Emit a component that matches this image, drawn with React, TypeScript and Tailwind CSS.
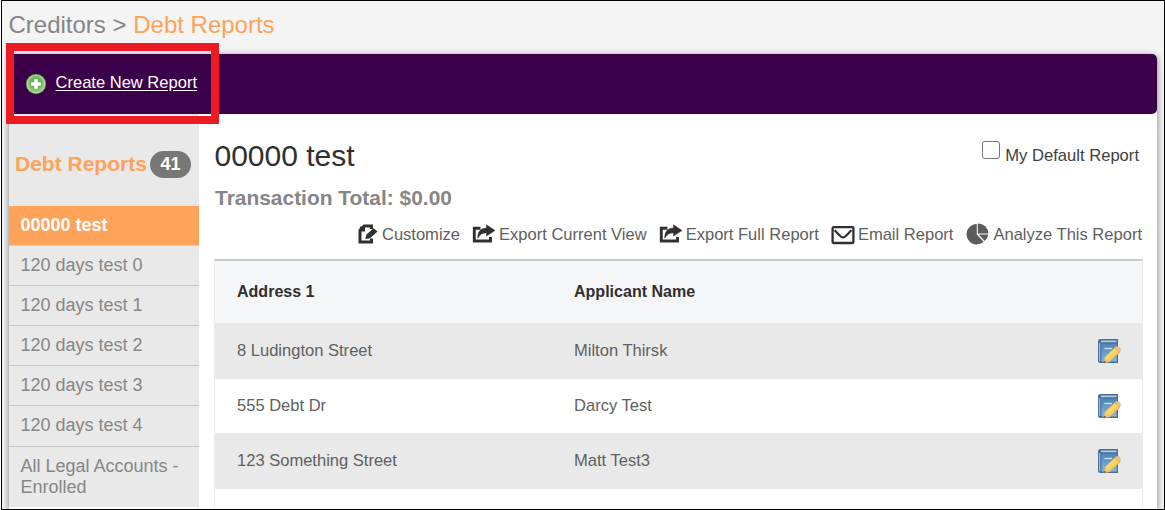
import React from "react";

const reports = ["120 days test 0", "120 days test 1", "120 days test 2", "120 days test 3"];

const rows = [
  { address: "8 Ludington Street", name: "Milton Thirsk", cls: "h-14 bg-[#e9e9e9]" },
  { address: "555 Debt Dr", name: "Darcy Test", cls: "h-[54px] bg-white" },
  { address: "123 Something Street", name: "Matt Test3", cls: "h-14 bg-[#e9e9e9]" },
];

function AddIcon() {
  return (
    <svg width="22" height="22" viewBox="0 0 22 22" className="shrink-0">
      <defs>
        <radialGradient id="add" cx=".5" cy=".45" r=".55">
          <stop offset="0" stopColor="#4f9a48" />
          <stop offset=".6" stopColor="#6bb45c" />
          <stop offset="1" stopColor="#9bd07f" />
        </radialGradient>
      </defs>
      <circle cx="11" cy="11" r="10.2" fill="#5d8a55" />
      <circle cx="11" cy="11" r="9.3" fill="#b4dba6" />
      <circle cx="11" cy="11" r="8.2" fill="url(#add)" />
      <path d="M9.4 6.300h3.200v3.100h3.100v3.200h-3.100v3.100H9.400v-3.100H6.300V9.400h3.100z" fill="#fff" stroke="#fff" strokeWidth=".5" strokeLinejoin="round" />
    </svg>
  );
}

function CustomizeIcon() {
  return (
    <svg width="20" height="20" viewBox="0 0 20 20" className="mb-[2px] shrink-0">
      <path d="M13.500 5V2H6.200L2 6.400V18H13.500V14.500" fill="none" stroke="#303030" strokeWidth="3" />
      <path d="M2 2.500h5v5H1.500z" fill="#303030" />
      <path d="M7.200 15l1.300-4.600L15.600 4.200l3.900 3.300-7.500 6.800z" fill="#303030" />
    </svg>
  );
}

function ExportIcon() {
  return (
    <svg width="24" height="20" viewBox="0 0 24 20" className="mb-[2px] shrink-0">
      <path d="M8.500 4.200H2.300v12.800h16.200V13" fill="none" stroke="#303030" strokeWidth="2.900" />
      <path d="M5.800 14.200C5.600 7.500 8.800 4.100 14.500 4V.8l8.500 5.600-8.500 5.700V8.900c-4.200-.2-6.600 1.600-8.700 5.300z" fill="#303030" stroke="#303030" strokeWidth=".5" />
    </svg>
  );
}

function MailIcon() {
  return (
    <svg width="24" height="20" viewBox="0 0 24 20" className="shrink-0">
      <rect x="1.600" y="2.200" width="20.800" height="15.800" rx="1" fill="none" stroke="#303030" strokeWidth="2.300" />
      <path d="M3.500 5.200c2.800 2.500 6.400 7.200 8.500 7.200s5.700-4.700 8.500-7.200" fill="none" stroke="#303030" strokeWidth="2.200" />
    </svg>
  );
}

function PieIcon() {
  return (
    <svg width="23" height="22" viewBox="0 0 23 22" className="mb-[2px] shrink-0">
      <path d="M10.800 1A10.200 10.200 0 1 0 17.600 18.700L10.800 11.600z" fill="#5c5c5c" />
      <path d="M11.800 .5A10 10 0 0 1 22.300 10.600H11.800z" fill="#5c5c5c" />
      <path d="M12.600 11.500H22.300A9.500 9.500 0 0 1 18.700 17.900z" fill="#5c5c5c" />
    </svg>
  );
}

function EditIcon() {
  return (
    <svg width="24" height="26" viewBox="0 0 24 26" className="shrink-0">
      <defs>
        <linearGradient id="book" x1="0" y1="0" x2="0" y2="1">
          <stop offset="0" stopColor="#4f82b7" />
          <stop offset="1" stopColor="#86b8dc" />
        </linearGradient>
        <linearGradient id="pencil" x1="0" y1="0" x2="1" y2="1">
          <stop offset="0" stopColor="#fff09a" />
          <stop offset="1" stopColor="#f0b530" />
        </linearGradient>
      </defs>
      <path d="M3.500 1H21V25H3.500Q1 25 1 22.500V3.500Q1 1 3.500 1z" fill="#456f9f" />
      <path d="M4 2.500H19.500v1.700H4z" fill="#b9cce0" />
      <path d="M4.500 5.500H19.800V23.500H4.500z" fill="url(#book)" />
      <path d="M2.600 5V23" stroke="#9bbddc" strokeWidth="1.300" />
      <path d="M7.500 10.500h7.500" stroke="#d3e6f4" strokeWidth="1.300" />
      <path d="M8 19L18 9.500 23 14 13 23.500 7 25z" fill="url(#pencil)" stroke="#dda33c" strokeWidth=".7" />
      <path d="M18 9.500q1.500-2 4-.5 2.500 2 .7 5z" fill="#f3c594" stroke="#d69a66" strokeWidth=".6" />
      <path d="M7 25l1-5.500 5 4z" fill="#e4c49b" />
      <path d="M7 25l.5-2.300 1.800 1.600z" fill="#444" />
    </svg>
  );
}

export default function App() {
  return (
    <div className="h-[510px] w-[1165px] overflow-hidden bg-white pl-px font-['Liberation_Sans',Arial,sans-serif]">
      <div className="relative h-[510px] overflow-hidden border border-black bg-[#f4f4f4]">
        <h1 className="flex h-[53px] items-start pl-[6.500px] pt-[9px] text-[24px] leading-[30px] text-[#868686]">
          <span className="whitespace-pre">Creditors &gt; <span className="text-[#ffa25a]">Debt Reports</span></span>
        </h1>
        <main className="ml-[7px] h-[455px] w-[1148px] rounded-t-[5px] bg-white shadow-[0_2px_7px_0_#777]">
          <div className="flex h-[60px] items-center rounded-r-[5px] bg-[#3c004a] pl-4">
            <AddIcon />
            <a className="mb-[2px] ml-[8.500px] text-[16.550px] text-white underline underline-offset-2">Create New Report</a>
          </div>
          <div className="flex h-[393px]">
            <aside className="w-[190px] shrink-0 bg-[#e9e9e9] text-[18px] text-[#868686]">
              <div className="flex h-[92px] items-center pl-[6px] pt-[8px]">
                <h2 className="w-[131px] whitespace-nowrap text-[21px] font-bold text-[#ffa25a]">Debt Reports</h2>
                <span className="ml-[4px] flex h-[27px] w-[41px] items-center justify-center rounded-full bg-[#777] text-[18px] font-bold text-white">41</span>
              </div>
              <div className="flex h-10 items-center border-b border-[#ccc] bg-[#ffa25a] pl-[11.500px] font-bold text-white">00000 test</div>
              {reports.map((r) => (
                <div key={r} className="flex h-10 items-center border-b border-[#c8c8c8] pl-[11.500px]">{r}</div>
              ))}
              <div className="flex h-[41px] items-center border-b border-[#c8c8c8] pb-px pl-[11.500px]">120 days test 4</div>
              <div className="pl-[11.500px] pt-[9px] leading-[21px]">All Legal Accounts -<br />Enrolled</div>
            </aside>
            <section className="flex h-[395px] w-[944px] flex-col pl-[15px]">
              <div className="flex h-[60px] justify-between pt-[22px]">
                <h2 className="pl-[0.500px] text-[30px] leading-[40px] text-[#303030]">00000 test</h2>
                <label className="flex pt-[5px] text-[16.600px] text-[#404040]">
                  <input type="checkbox" className="mr-[5px] h-[18px] w-[18px] appearance-none rounded-[3px] border-[1.5px] border-[#777] bg-white" />
                  <span className="mr-1 pt-[5px] leading-[20px]">My Default Report</span>
                </label>
              </div>
              <div className="h-[48px] pl-px pt-[12px] text-[20.950px] font-bold leading-[24px] text-[#868686]">Transaction Total: $0.00</div>
              <div className="flex h-[37px] items-start justify-end gap-[12px] whitespace-nowrap text-[16.550px] leading-[26px] text-[#606060]">
                <span className="flex items-center gap-[4px]"><CustomizeIcon />Customize</span>
                <span className="flex items-center gap-[3px]"><ExportIcon />Export Current View</span>
                <span className="flex items-center gap-[3px]"><ExportIcon />Export Full Report</span>
                <span className="mr-px flex items-center gap-[3px]"><MailIcon />Email Report</span>
                <span className="mr-px flex items-center gap-[4px]"><PieIcon />Analyze This Report</span>
              </div>
              <div className="flex-1 border-x border-t-2 border-x-[#ececec] border-t-[#c9cbcc] text-[16.550px] text-[#606060]">
                <div className="flex h-[62px] items-center bg-[#f5f6f8] pb-[2px] pl-[22px] text-[16.050px] font-bold text-[#303030]"><span className="w-[337px]">Address 1</span><span>Applicant Name</span></div>
                {rows.map((r) => (
                  <div key={r.address} className={`flex items-center pl-[22px] ${r.cls}`}>
                    <span className="w-[337px]">{r.address}</span><span className="w-[523px]">{r.name}</span><EditIcon />
                  </div>
                ))}
              </div>
            </section>
          </div>
        </main>
        <div className="absolute left-[4px] top-[42px] h-[81px] w-[213px] border-[8px] border-[#ed1c24]" />
      </div>
    </div>
  );
}
